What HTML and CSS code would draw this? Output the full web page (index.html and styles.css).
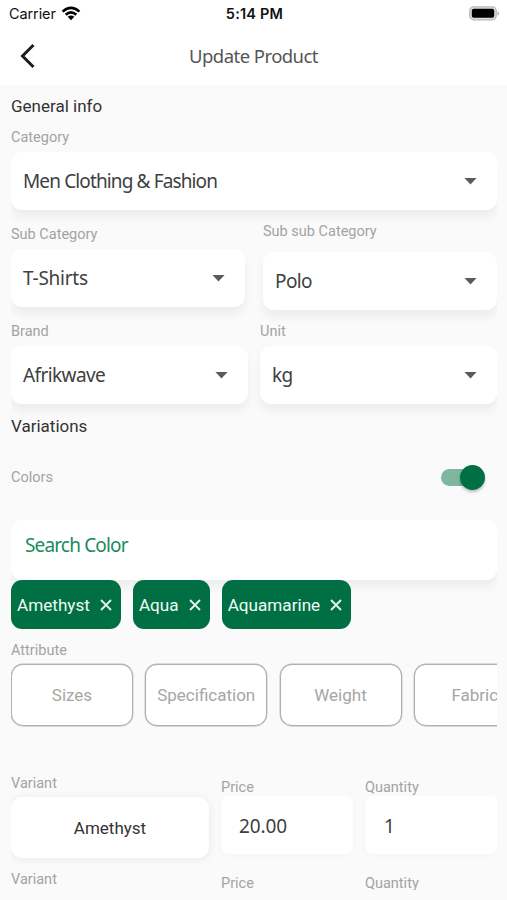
FILE: index.html
```html
<!DOCTYPE html>
<html lang="en">
<head>
<meta charset="utf-8">
<title>Update Product</title>
<link rel="stylesheet" href="styles.css">
</head>
<body>
<header class="top">
  <div class="status">
    <div class="carrier"><span class="carrier-name">Carrier</span>
      <svg class="wifi" width="20" height="15" viewBox="0 0 20 15"><g fill="none" stroke="#000" stroke-width="2.6"><path d="M1.6 5.6Q10-2 18.400 5.600"/><path d="M4.700 8.800Q10 4 15.300 8.800"/></g><path d="M6.700 10.800Q10 8.200 13.300 10.800L10 14.300Z"/></svg>
    </div>
    <div class="clock">5:14 PM</div>
    <svg class="battery" width="31" height="15" viewBox="0 0 31 15"><rect x=".8" y=".8" width="26.400" height="13" rx="4" fill="#ddd" stroke="#b9b9b9" stroke-width="1.300"/><rect x="2.800" y="2.800" width="22.400" height="9" rx="2"/><path d="M28.500 5q3 2.400 0 4.800z" fill="#aaa"/></svg>
  </div>
  <div class="bar">
    <svg class="back" width="18" height="26" viewBox="0 0 18 26"><path d="M14.500 2L3.500 13L14.500 24" fill="none" stroke="#1c1c1c" stroke-width="3"/></svg>
    <h1>Update Product</h1>
  </div>
</header>
<main class="scroll">
  <h2 class="general">General info</h2>
  <div class="label category-label">Category</div>
  <div class="select"><span class="wide-text">Men Clothing &amp; Fashion</span><i class="arrow"></i></div>
  <div class="row subs">
    <div class="field sub"><div class="label">Sub Category</div><div class="select"><span class="loose-text">T-Shirts</span><i class="arrow"></i></div></div>
    <div class="field subsub"><div class="label">Sub sub Category</div><div class="select"><span>Polo</span><i class="arrow"></i></div></div>
  </div>
  <div class="row brands">
    <div class="field"><div class="label">Brand</div><div class="select"><span>Afrikwave</span><i class="arrow"></i></div></div>
    <div class="field"><div class="label">Unit</div><div class="select"><span>kg</span><i class="arrow"></i></div></div>
  </div>
  <h2 class="variations">Variations</h2>
  <div class="colors"><div class="label">Colors</div><div class="switch"><div class="track"></div><div class="knob"></div></div></div>
  <div class="search"><span>Search Color</span></div>
  <div class="chips">
    <div class="chip"><span>Amethyst</span><svg width="12" height="12" viewBox="0 0 12 12"><path d="M1 1L11 11M11 1L1 11"/></svg></div>
    <div class="chip"><span>Aqua</span><svg width="12" height="12" viewBox="0 0 12 12"><path d="M1 1L11 11M11 1L1 11"/></svg></div>
    <div class="chip"><span>Aquamarine</span><svg width="12" height="12" viewBox="0 0 12 12"><path d="M1 1L11 11M11 1L1 11"/></svg></div>
  </div>
  <div class="label attribute-label">Attribute</div>
  <div class="attributes"><div>Sizes</div><div>Specification</div><div>Weight</div><div>Fabric</div></div>
  <div class="variant">
    <div><div class="label">Variant</div><div class="name">Amethyst</div></div>
    <div class="entry"><div class="label">Price</div><div class="input">20.00</div></div>
    <div class="entry"><div class="label">Quantity</div><div class="input quantity">1</div></div>
  </div>
  <div class="variant next">
    <div class="label">Variant</div>
    <div class="label entry">Price</div>
    <div class="label entry">Quantity</div>
  </div>
</main>
</body>
</html>
```
FILE: styles.css
```css
* { box-sizing: border-box; }
body { margin: 0; width: 507px; height: 900px; overflow: hidden; background: #fafafa; font-family: Roboto, sans-serif; color: #404040; }
.top { height: 85px; background: #fff; }
.status { height: 28px; display: grid; grid-template-columns: 1fr auto 1fr; padding: 0 7px 0 9px; align-items: center; color: #111; }
.carrier { display: flex; align-items: center; gap: 5px; font: 14.500px/28px Inter, sans-serif; letter-spacing: -.1px; }
.carrier-name { width: 47px; }
.wifi { margin-bottom: 2px; }
.clock { font: 600 14.500px/28px Inter, sans-serif; letter-spacing: .2px; }
.battery { justify-self: end; margin-bottom: 2px; }
.bar { height: 56px; display: grid; grid-template-columns: 60px 1fr 60px; align-items: center; }
.back { margin-left: 19px; }
h1 { margin: 0; text-align: center; font: 400 18.500px/56px "Noto Sans", sans-serif; letter-spacing: -.55px; color: #555; }
.scroll { margin: 0 10px 0 11px; height: 805px; overflow: hidden; }
h2 { margin: 0; font-size: 17px; font-weight: 400; color: #333; }
.general { height: 42px; line-height: 42px; }
.label { font-size: 14.500px; line-height: 21px; color: #a3a3a3; white-space: nowrap; }
.category-label { height: 25px; }
.select { height: 58px; border-radius: 11px; background: #fff; box-shadow: 0 7px 10px rgba(0,0,0,.055); display: flex; align-items: center; justify-content: space-between; padding: 0 20px 0 12px; font: 19px/58px "Noto Sans", sans-serif; letter-spacing: -.6px; }
.wide-text { letter-spacing: -.87px; }
.loose-text { letter-spacing: -.25px; }
.arrow { width: 13px; height: 7px; background: #5b5b5b; clip-path: polygon(0 0, 100% 0, 50% 100%); }
.row { display: grid; }
.subs { grid-template-columns: 234px 234px; gap: 18px; height: 100px; }
.sub { padding-top: 14px; }
.sub .label { height: 25px; }
.subsub { padding-top: 11px; }
.subsub .label { height: 31px; }
.brands { grid-template-columns: 237px 237px; gap: 12px; padding-top: 11px; }
.brands .label { height: 25px; }
.variations { height: 44px; line-height: 44px; }
.colors { height: 72px; padding: 0 12px 13px 0; display: flex; align-items: center; justify-content: space-between; }
.switch { width: 44px; height: 25px; display: flex; align-items: center; }
.track { flex: none; width: 36px; height: 17px; border-radius: 9px; background: #7db7a0; }
.knob { flex: none; width: 25px; height: 25px; margin-left: -17px; border-radius: 50%; background: #007044; box-shadow: 0 2px 3px rgba(0,0,0,.25); }
.search { height: 60px; border-radius: 11px; background: #fff; box-shadow: 0 7px 10px rgba(0,0,0,.055); padding: 0 14px; font: 19px/50px "Noto Sans", sans-serif; letter-spacing: -.85px; color: #1b8a5d; }
.chips { display: flex; gap: 12px; position: relative; }
.chip { height: 49px; border-radius: 11px; background: #007044; color: #f0faf5; display: flex; align-items: center; gap: 10px; padding: 0 9px 0 6px; font-size: 17.150px; }
.chip svg { fill: none; stroke: #e6f5ed; stroke-width: 1.800; }
.attribute-label { padding-top: 11px; height: 35px; }
.attributes { display: flex; gap: 12.250px; }
.attributes div { flex: none; width: 122px; height: 62px; border: 1.500px solid #b0b0b0; border-radius: 12px; background: #fff; color: #a6a6a6; font-size: 17px; line-height: 60px; text-align: center; box-shadow: 0 0 0 .4px #b8b8b8; }
.variant { display: grid; grid-template-columns: 198px 132px 133px; column-gap: 12px; padding-top: 47px; height: 143px; }
.variant .name { margin-top: 3px; height: 61px; border-radius: 11px; background: #fff; box-shadow: 0 1px 8px rgba(0,0,0,.08); line-height: 62px; text-align: center; font-size: 17px; color: #333; }
.entry { padding-top: 4px; }
.input { margin-top: -2px; height: 58px; border-radius: 8px; background: #fff; box-shadow: 0 2px 6px rgba(0,0,0,.025); padding: 0 18px; font: 19px/60px "Noto Sans", sans-serif; letter-spacing: -.1px; }
.quantity { padding-left: 19px; }
.next { padding-top: 0; height: 26px; }
```
